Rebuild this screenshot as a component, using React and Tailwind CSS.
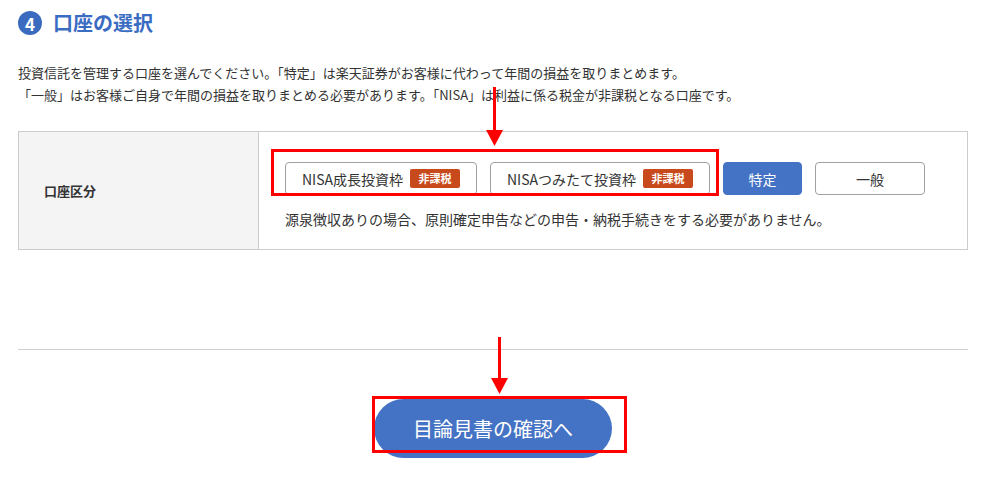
import React from "react";

const font = { fontFamily: '"Noto Sans CJK JP", "Liberation Sans", sans-serif' };

function TaxBadge() {
  return (
    <span className="ml-[7px] inline-flex h-[19px] w-[50px] items-center justify-center rounded-[2px] bg-[#c8491c] text-[11px] font-bold leading-none text-white">
      非課税
    </span>
  );
}

function AccountButton({ children, active, className = "" }) {
  return (
    <button
      type="button"
      className={
        "flex h-[33px] items-center justify-center rounded-[4px] border text-[14px] leading-none " +
        (active
          ? "border-[#4472c4] bg-[#4472c4] text-white"
          : "border-[#a0a0a0] bg-white text-[#333]") +
        " " +
        className
      }
    >
      {children}
    </button>
  );
}

// 注釈（赤い矢印・赤枠）
function Arrow({ left, top, length }) {
  return (
    <div className="pointer-events-none absolute flex flex-col items-center" style={{ left, top }}>
      <div className="w-[3px] bg-[#ff0000]" style={{ height: length }} />
      <svg width="17" height="16" viewBox="0 0 17 16" className="-mt-px block">
        <polygon points="0,0 17,0 8.5,16" fill="#ff0000" />
      </svg>
    </div>
  );
}

export default function App() {
  return (
    <div className="relative h-[479px] w-[1002px] overflow-hidden bg-white text-[#333]" style={font}>
      <div className="w-[968px] pl-[18px] pt-[11px]">
        {/* 見出し */}
        <div className="flex items-center">
          <span className="flex h-[24px] w-[24px] items-center justify-center rounded-full bg-[#3a6bbf] text-[17px] font-bold leading-none text-white">
            4
          </span>
          <h2 className="ml-[11px] text-[20px] font-bold leading-[24px] text-[#3a6cc2]">口座の選択</h2>
        </div>

        {/* 説明文 */}
        <p className="mt-[27px] text-[13px] leading-[22px]">
          投資信託を管理する口座を選んでください。「特定」は楽天証券がお客様に代わって年間の損益を取りまとめます。
          <br />
          「一般」はお客様ご自身で年間の損益を取りまとめる必要があります。「NISA」は利益に係る税金が非課税となる口座です。
        </p>

        {/* 口座区分テーブル */}
        <div className="mt-[25px] flex h-[119px] border border-[#cccccc]">
          <div className="flex w-[240px] shrink-0 items-center border-r border-[#cccccc] bg-[#f4f4f4] pl-[25px] text-[13px] font-bold">
            口座区分
          </div>
          <div className="flex-1 pl-[26px] pt-[30px]">
            <div className="flex gap-[13px]">
              <AccountButton className="w-[192px]">
                NISA成長投資枠
                <TaxBadge />
              </AccountButton>
              <AccountButton className="w-[220px]">
                NISAつみたて投資枠
                <TaxBadge />
              </AccountButton>
              <AccountButton active className="w-[79px]">
                特定
              </AccountButton>
              <AccountButton className="w-[110px]">一般</AccountButton>
            </div>
            <p className="mt-[14px] text-[14px] leading-[20px]">
              源泉徴収ありの場合、原則確定申告などの申告・納税手続きをする必要がありません。
            </p>
          </div>
        </div>

        <div className="mt-[99px] h-px bg-[#d0d0d0]" />

        {/* 次へボタン */}
        <div className="mt-[49px] flex justify-center">
          <button
            type="button"
            className="h-[59px] w-[238px] rounded-full bg-[#4472c4] text-[20px] leading-none text-white"
          >
            目論見書の確認へ
          </button>
        </div>
      </div>

      {/* 注釈 */}
      <Arrow left={486} top={87} length={44} />
      <div className="pointer-events-none absolute left-[271px] top-[149px] h-[47px] w-[448px] border-[3px] border-[#ff0000]" />
      <Arrow left={491} top={337} length={42} />
      <div className="pointer-events-none absolute left-[372px] top-[396px] h-[57px] w-[255px] border-[3px] border-[#ff0000]" />
    </div>
  );
}
